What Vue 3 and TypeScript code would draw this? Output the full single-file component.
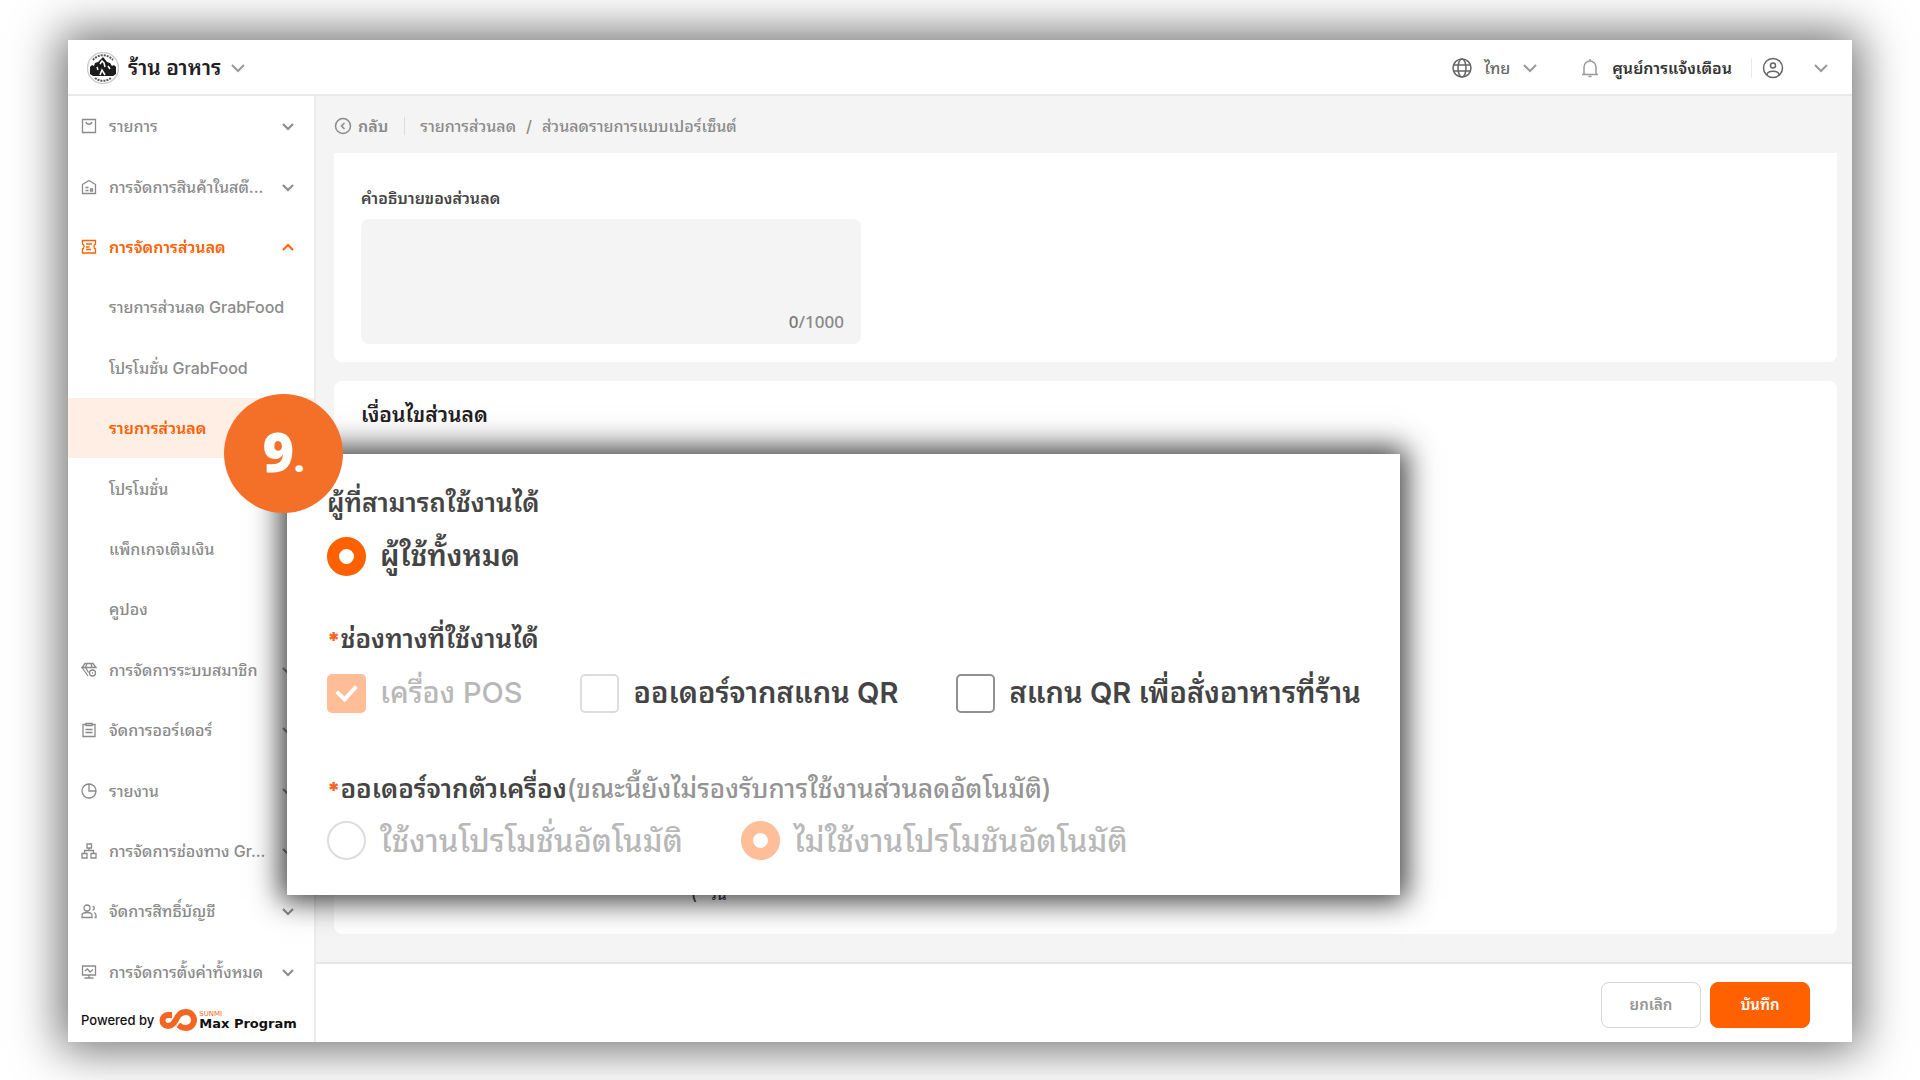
<script setup lang="ts">
import { ref } from 'vue'

interface NavItem {
  label: string
  icon?: string
  open?: boolean
  active?: boolean
}

const nav: NavItem[] = [
  { label: 'รายการ', icon: 'bag' },
  { label: 'การจัดการสินค้าในสต๊...', icon: 'store' },
  { label: 'การจัดการส่วนลด', icon: 'coupon', open: true },
  { label: 'รายการส่วนลด GrabFood' },
  { label: 'โปรโมชั่น GrabFood' },
  { label: 'รายการส่วนลด', active: true },
  { label: 'โปรโมชั่น' },
  { label: 'แพ็กเกจเติมเงิน' },
  { label: 'คูปอง' },
  { label: 'การจัดการระบบสมาชิก', icon: 'member' },
  { label: 'จัดการออร์เดอร์', icon: 'order' },
  { label: 'รายงาน', icon: 'report' },
  { label: 'การจัดการช่องทาง Gr...', icon: 'channel' },
  { label: 'จัดการสิทธิ์บัญชี', icon: 'users' },
  { label: 'การจัดการตั้งค่าทั้งหมด', icon: 'monitor' },
]

const icons: Record<string, string> = {
  bag: 'M1.500 1.500h13v13h-13zM5 4c.6 3 5.400 3 6 0',
  store: 'M1.500 5.500 8 1.500l6.500 4v9h-13zM4.500 8.500h3M4.500 11.500h3M9.500 10h2v2h-2z',
  coupon: 'M1.500 1.500h13v3.500c-2 .5-2 4.500 0 5V14h-13v-4c2-.5 2-4.500 0-5zM5 5h6M5 8h3.500M5 10.500h5',
  member: 'M4 1.500h8l3 4H1zM4.500 5.500 6 1.500M11 5.500 10 1.500M1 5.500l6 8.500M4.500 5.500l3 5M14.500 11a3 3 0 1 1-6 0 3 3 0 0 1 6 0zM11 11h1',
  order: 'M5 2.500H2v12h12v-12h-3M5 1.500h6v2H5zM4.500 7.500h7M4.500 10.500h7',
  report: 'M15 8A7 7 0 1 1 1 8a7 7 0 0 1 14 0zM8 1v7h7',
  channel: 'M6 1h4.500v4H6zM1 10.500h5V15H1zM10 10.500h5V15h-5zM8 5v2.500M3.500 10.500v-3h9v3',
  users: 'M9 5a3 3 0 1 1-6 0 3 3 0 0 1 6 0zM1 14.500v-2c0-4 10-4 10 0v2zM11.500 3.500a1.500 1.500 0 1 1 0 3.500M13 9.500c1.500.5 2 1.500 2 3v2h-1.500',
  monitor: 'M1.500 2h13v9h-13zM8 11v3M3.500 14h9M4 7l2.500-2 2.500 3 3-2.500',
}

const description = ref('')
const audience = ref('all')
const pos = ref(true)
const qrOrder = ref(false)
const qrTable = ref(false)
const auto = ref('off')
</script>

<template>
  <div class="page">
    <div class="window">
      <header class="topbar">
        <button class="plain shop" type="button">
          <svg class="logo" viewBox="0 0 32 32">
            <circle cx="16" cy="16" r="15.5" fill="#fff" stroke="#ccc" />
            <path d="M3 22V15l2-2 2 1 1-3 3-1 5-5 4 5 3 1 2 3 2-1 2 2v7l-3 2H6z" fill="#1c1c1c" />
            <path d="m13 12 2-3 2 2 1 4M13 23l2-5 3 5M10 15l1 3M21 14l2 3" fill="none" stroke="#fff" />
            <path d="M6 8a13 13 0 0 1 20 0M8 26a13 13 0 0 0 16 0" fill="none" stroke="#555" stroke-width="2" stroke-dasharray="2 1" />
          </svg>
          <span>ร้าน อาหาร</span>
          <svg class="chevron" viewBox="0 0 16 16"><path d="m2 5 6 6 6-6" /></svg>
        </button>
        <div class="tools">
          <button class="plain lang" type="button">
            <svg class="i20" viewBox="0 0 20 20"><circle cx="10" cy="10" r="9" /><ellipse cx="10" cy="10" rx="4" ry="9" /><path d="M2 7h16M2 13h16" /></svg>
            <span>ไทย</span>
            <svg class="chevron" viewBox="0 0 16 16"><path d="m2 5 6 6 6-6" /></svg>
          </button>
          <button class="plain notice" type="button">
            <svg class="i20" viewBox="0 0 20 20"><path d="M2 16.500h16M4 16V9a6 6 0 0 1 12 0v7M10 1v2M8.500 18.500h3" /></svg>
            <span>ศูนย์การแจ้งเตือน</span>
          </button>
          <button class="plain account" type="button" aria-label="บัญชี">
            <svg class="avatar" viewBox="0 0 22 22"><circle cx="11" cy="11" r="9.500" /><circle cx="11" cy="8.500" r="2.500" /><path d="M5 18c0-5 12-5 12 0" /></svg>
            <svg class="chevron" viewBox="0 0 16 16"><path d="m2 5 6 6 6-6" /></svg>
          </button>
        </div>
      </header>

      <div class="body">
        <aside class="sidebar">
          <nav>
            <a v-for="item in nav" :key="item.label" href="#" :class="{ open: item.open, active: item.active }">
              <svg v-if="item.icon" class="nav-icon" viewBox="0 0 16 16"><path :d="icons[item.icon]" /></svg>
              <span class="nav-label" :class="{ child: !item.icon }">{{ item.label }}</span>
              <svg v-if="item.icon" class="arrow" viewBox="0 0 16 16"><path :d="item.open ? 'm3 11 5-5 5 5' : 'm3 6 5 5 5-5'" /></svg>
            </a>
          </nav>
          <div class="powered">
            <span>Powered by</span>
            <svg class="loop" viewBox="0 0 40 24">
              <path d="M13 7H9a5.500 5.500 0 0 0 0 11c4 0 5.500-2 7.500-5.500S20.500 4 27 4a8 8 0 0 1 0 16c-3.500 0-6-1-8-3.500" stroke="#f26522" stroke-width="6" />
              <path d="m19.500 15.500-3.500 6" stroke="#fff" stroke-width="1" />
            </svg>
            <div class="brand"><span class="sunmi">SUNMI</span><b>Max Program</b></div>
          </div>
        </aside>

        <main class="main">
          <div class="crumbs">
            <a class="back" href="#">
              <svg class="back-icon" viewBox="0 0 18 18"><circle cx="9" cy="9" r="7.500" /><path d="M10.500 6 7.500 9l3 3" /></svg>
              กลับ
            </a>
            <a href="#">รายการส่วนลด</a><span class="slash">/</span><span>ส่วนลดรายการแบบเปอร์เซ็นต์</span>
          </div>

          <section class="card first">
            <label for="description">คำอธิบายของส่วนลด</label>
            <div class="area">
              <textarea id="description" v-model="description" maxlength="1000"></textarea>
              <div class="count"><span>{{ description.length }}</span>/1000</div>
            </div>
          </section>

          <section class="card second">
            <h2>เงื่อนไขส่วนลด</h2>
            <div class="days"><span>(</span><span>วัน</span></div>
          </section>

          <footer class="actions">
            <button class="cancel" type="button">ยกเลิก</button>
            <button class="save" type="button">บันทึก</button>
          </footer>
        </main>
      </div>

      <div class="panel">
        <fieldset>
          <legend>ผู้ที่สามารถใช้งานได้</legend>
          <div class="options">
            <label class="option"><input v-model="audience" type="radio" name="audience" value="all" />ผู้ใช้ทั้งหมด</label>
          </div>
        </fieldset>
        <fieldset>
          <legend><i>*</i>ช่องทางที่ใช้งานได้</legend>
          <div class="options">
            <label class="option off"><input v-model="pos" type="checkbox" disabled />เครื่อง POS</label>
            <label class="option"><input v-model="qrOrder" class="pale" type="checkbox" />ออเดอร์จากสแกน QR</label>
            <label class="option"><input v-model="qrTable" type="checkbox" />สแกน QR เพื่อสั่งอาหารที่ร้าน</label>
          </div>
        </fieldset>
        <fieldset class="auto">
          <legend><i>*</i>ออเดอร์จากตัวเครื่อง<small>(ขณะนี้ยังไม่รองรับการใช้งานส่วนลดอัตโนมัติ)</small></legend>
          <div class="options">
            <label class="option off"><input v-model="auto" type="radio" name="auto" value="on" disabled />ใช้งานโปรโมชั่นอัตโนมัติ</label>
            <label class="option off"><input v-model="auto" type="radio" name="auto" value="off" disabled />ไม่ใช้งานโปรโมชันอัตโนมัติ</label>
          </div>
        </fieldset>
      </div>
      <div class="badge">9<span>.</span></div>
    </div>
  </div>
</template>

<style>
body {
  background: #fff;
}
</style>

<style scoped>
* {
  box-sizing: border-box;
}
.page {
  display: flex;
  min-height: 100vh;
  padding: 40px 68px 38px;
  font: 500 16px/24px Inter, "Noto Sans Thai Looped", sans-serif;
  color: #8a8a8a;
}
.window {
  position: relative;
  display: flex;
  flex: 1;
  flex-direction: column;
  min-width: 0;
  background: #fff;
  box-shadow: 0 0 44px 8px rgba(0, 0, 0, 0.56);
}
svg {
  flex: none;
  fill: none;
  stroke: currentColor;
  stroke-width: 1.5;
}
a {
  color: inherit;
  text-decoration: none;
}
button {
  font: inherit;
  cursor: pointer;
}
.plain {
  display: flex;
  align-items: center;
  padding: 0;
  border: 0;
  background: none;
  color: inherit;
}
.topbar {
  display: flex;
  align-items: center;
  justify-content: space-between;
  height: 56px;
  padding: 1px 23px 0 19px;
  border-bottom: 2px solid #e9e9e9;
}
.shop {
  gap: 9px;
  font-size: 21px;
  font-weight: 600;
  color: #1f2024;
}
.logo {
  width: 32px;
  height: 32px;
  stroke: none;
}
.chevron {
  width: 16px;
  height: 16px;
  color: #999;
  stroke-width: 2;
}
.tools {
  display: flex;
  align-items: center;
  color: #666;
}
.i20 {
  width: 20px;
  height: 20px;
}
.lang {
  gap: 12px;
  margin-right: 42px;
}
.notice {
  gap: 12px;
  padding-right: 19px;
  border-right: 1px solid #e8e8e8;
  line-height: 20px;
  font-weight: 600;
}
.notice svg {
  color: #999;
}
.notice span {
  color: #333;
}
.account {
  gap: 29px;
  padding-left: 10px;
}
.avatar {
  width: 22px;
  height: 22px;
}
.body {
  display: flex;
  flex: 1;
}
.sidebar {
  display: flex;
  flex: none;
  flex-direction: column;
  width: 248px;
  border-right: 2px solid #ececec;
}
nav {
  display: flex;
  flex: 1;
  flex-direction: column;
}
nav a {
  display: flex;
  flex: 1;
  align-items: center;
  min-height: 48px;
  padding: 0 18px 0 13px;
}
.nav-icon {
  width: 16px;
  height: 16px;
  margin-right: 12px;
  stroke-width: 1.3;
}
.nav-label {
  flex: 1;
  min-width: 0;
  line-height: 32px;
  white-space: nowrap;
}
.child {
  padding-left: 28px;
}
.arrow {
  width: 16px;
  height: 16px;
  stroke-width: 2;
}
.open,
.active {
  font-weight: 600;
  color: #ff6000;
}
.active {
  background: #ffeee4;
}
.powered {
  display: flex;
  align-items: center;
  height: 40px;
  padding: 0 0 4px 13px;
  font-size: 13px;
  color: #111;
}
.loop {
  width: 40px;
  height: 24px;
  margin-left: 5px;
}
.brand {
  display: flex;
  flex-direction: column;
  font-family: "DejaVu Sans", sans-serif;
  font-size: 13px;
  line-height: 12px;
}
.sunmi {
  font-size: 7px;
  line-height: 8px;
  color: #f26522;
}
.main {
  display: flex;
  flex: 1;
  flex-direction: column;
  min-width: 0;
  background: #f4f4f4;
}
.crumbs {
  display: flex;
  align-items: center;
  height: 57px;
  padding: 3px 18px 0;
}
.back {
  display: flex;
  align-items: center;
  gap: 6px;
  margin-right: 15px;
  padding-right: 16px;
  border-right: 1px solid #ddd;
  line-height: 16px;
  font-weight: 600;
}
.back-icon {
  width: 18px;
  height: 18px;
}
.slash {
  margin: 0 10px;
}
.card {
  margin: 0 15px 19px 18px;
  padding: 0 27px;
  border-radius: 8px;
  background: #fff;
}
.first {
  padding-top: 33px;
  padding-bottom: 18px;
  border-radius: 0 0 8px 8px;
}
.first label {
  display: block;
  margin-bottom: 9px;
  font-weight: 600;
  color: #444;
}
.area {
  max-width: 500px;
  padding-bottom: 10px;
  border-radius: 8px;
  background: #f4f4f4;
}
textarea {
  display: block;
  width: 100%;
  height: 80px;
  padding: 12px 16px;
  border: 0;
  background: none;
  font: inherit;
  outline: none;
  resize: none;
}
.count {
  height: 35px;
  padding: 11px 17px 0;
  text-align: right;
  font: 500 17px/24px "Noto Sans", sans-serif;
}
.count span {
  color: #777;
}
.second {
  display: flex;
  flex: 1;
  flex-direction: column;
  justify-content: space-between;
  margin-bottom: 28px;
  padding-top: 19px;
  padding-bottom: 28px;
}
h2 {
  margin: 0;
  font-size: 21px;
  line-height: 30px;
  font-weight: 600;
  color: #1f2024;
}
.days {
  display: flex;
  gap: 12px;
  padding-left: 330px;
  font-size: 16px;
  color: #444;
}
.actions {
  display: flex;
  align-items: center;
  justify-content: flex-end;
  gap: 9px;
  height: 80px;
  padding: 3px 42px 0 0;
  border-top: 2px solid #e6e6e6;
  background: #fff;
}
.actions button {
  width: 100px;
  height: 46px;
  padding: 0;
  border: 1px solid #d6d6d6;
  border-radius: 8px;
  background: #fff;
  font-size: 15px;
  font-weight: 600;
  color: #949494;
}
.actions .save {
  border-color: #ff6000;
  background: #ff6000;
  color: #fff;
}
.panel {
  position: absolute;
  top: 414px;
  left: 219px;
  padding: 27px 39px 26px 40px;
  background: #fff;
  box-shadow: 0 0 28px 6px rgba(0, 0, 0, 0.78);
}
fieldset {
  min-width: 0;
  margin: 0 0 30px;
  padding: 0;
  border: 0;
}
fieldset.auto {
  margin: 43px 0 0;
}
legend {
  padding: 0;
  font-size: 26px;
  line-height: 44px;
  font-weight: 600;
  color: #444;
}
legend i {
  font-size: 22px;
  font-style: normal;
  font-weight: 900;
  color: #f26522;
}
legend small {
  font-size: 26px;
  font-weight: 500;
  color: #949494;
}
.options {
  display: flex;
  gap: 58px;
}
.option {
  display: flex;
  align-items: center;
  gap: 14px;
  height: 62px;
  font-size: 29px;
  font-weight: 600;
  line-height: 62px;
  white-space: nowrap;
  color: #444;
}
.auto .option {
  height: 57px;
  font-size: 31px;
  line-height: 57px;
}
.option.off {
  font-weight: 500;
  color: #b8b8b8;
}
.option input {
  appearance: none;
  flex: none;
  width: 39px;
  height: 39px;
  margin: 0;
  border: 2px solid #909090;
  border-radius: 5px;
  background: #fff;
}
.option .pale,
.option input:disabled {
  border-color: #ddd;
}
.option input[type="radio"] {
  border-radius: 50%;
}
.option input[type="radio"]:checked {
  border: 12px solid #ff6000;
}
.option input[type="radio"]:checked:disabled {
  border-color: #ffbd98;
}
.option input[type="checkbox"]:checked {
  border: 0;
  background: #ffbd98 url("data:image/svg+xml,%3Csvg xmlns='http://www.w3.org/2000/svg' viewBox='0 0 40 40'%3E%3Cpath d='m10 18 8 8 12-13' fill='none' stroke='white' stroke-width='4'/%3E%3C/svg%3E");
}
.badge {
  position: absolute;
  top: 354px;
  left: 156px;
  display: flex;
  align-items: baseline;
  justify-content: center;
  width: 119px;
  height: 119px;
  padding-top: 29px;
  border-radius: 50%;
  background: #f47029;
  font: 800 54px/56px "Open Sans", sans-serif;
  color: #fff;
}
.badge span {
  font-size: 36px;
}
</style>
